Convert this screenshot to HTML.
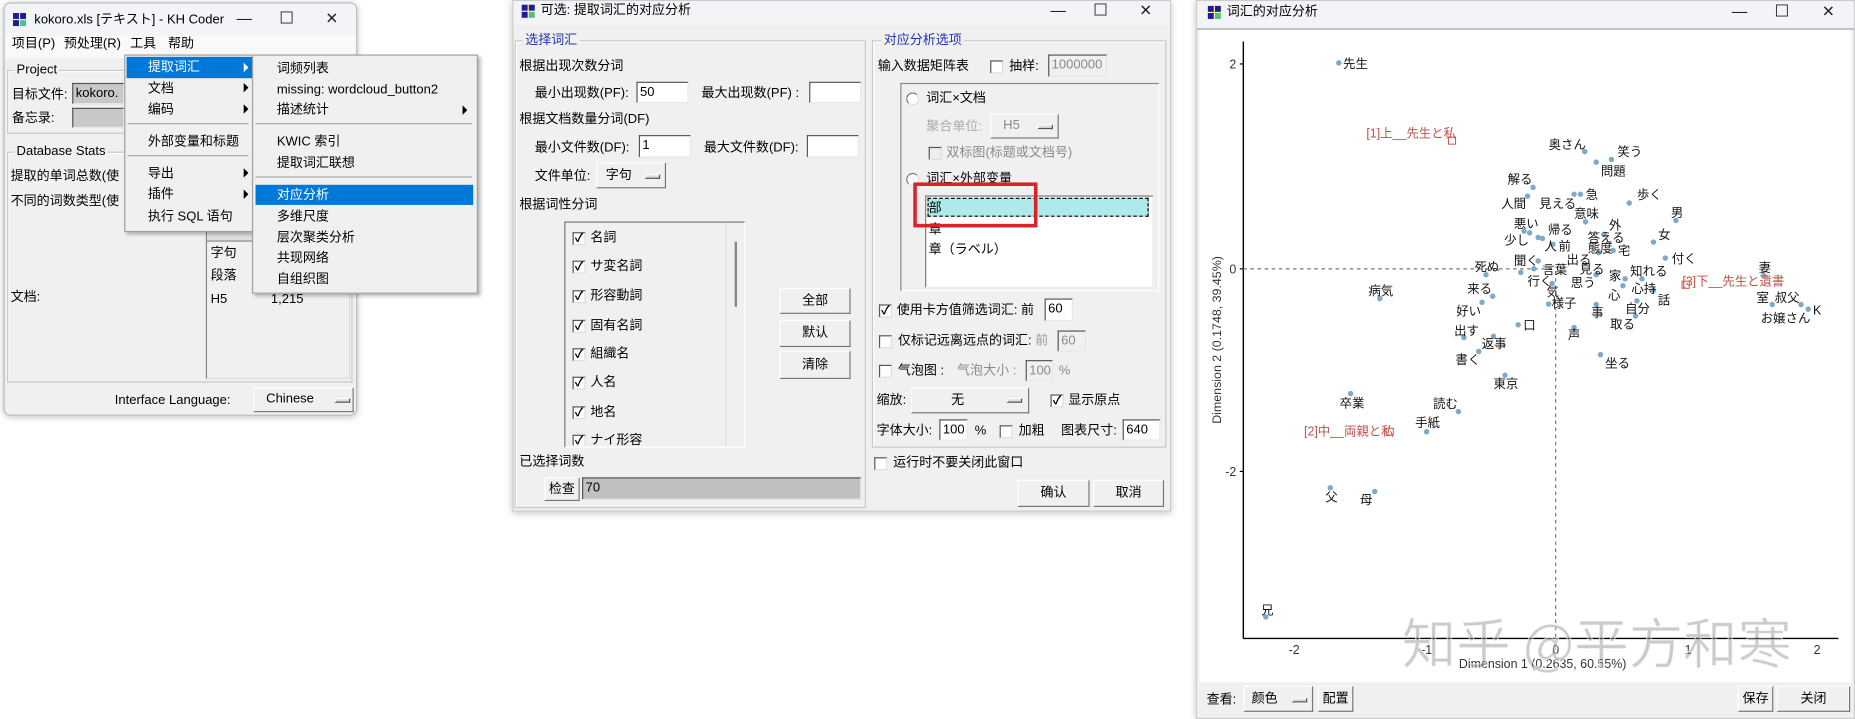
<!DOCTYPE html>
<html><head><meta charset="utf-8">
<style>
html,body{margin:0;padding:0;width:1855px;height:719px;overflow:hidden;background:#fff}
#s{position:absolute;left:0;top:0;width:1568px;height:607px;transform:scale(1.1830,1.1845);transform-origin:0 0;font-family:"Liberation Sans","Noto Sans CJK SC",sans-serif;font-size:11px;color:#000}
.w{position:absolute;background:#f0f0f0;box-shadow:0 1px 6px rgba(0,0,0,.25);border:1px solid #bbb}
.tb{position:absolute;left:0;top:0;right:0;background:#f3f5f9}
.t{position:absolute;white-space:nowrap;line-height:12px}
.g{color:#8a8a8a}
.ico{position:absolute;width:11px;height:11px;background:#fff6a0}
.ico i{position:absolute;width:5px;height:5px;background:#1b1b9c}
.ctl{position:absolute;font-size:13px;line-height:14px;color:#222}
.box{position:absolute;border:1px solid #a0a0a0}
.grp{position:absolute;border:1px solid #c8c8c8;box-shadow:inset 1px 1px 0 #fff}
.lab{position:absolute;background:#f0f0f0;padding:0 2px;line-height:12px;white-space:nowrap}
.inp{position:absolute;background:#fff;border-top:1px solid #555;border-left:1px solid #555;border-bottom:1px solid #e8e8e8;border-right:1px solid #e8e8e8;box-sizing:border-box;line-height:16px;padding-left:2px;white-space:nowrap}
.btn{position:absolute;background:#f0f0f0;border-top:1px solid #fff;border-left:1px solid #fff;border-bottom:1px solid #777;border-right:1px solid #777;box-sizing:border-box;text-align:center;white-space:nowrap}
.mb{position:absolute;width:11px;height:2px;border:1px solid #555;border-top-color:#fff;border-left-color:#fff;background:#ddd}
.cb{position:absolute;width:9px;height:9px;background:#fff;border-top:1px solid #555;border-left:1px solid #555;border-bottom:1px solid #ddd;border-right:1px solid #ddd;font-size:10px;line-height:9px;text-align:center;font-weight:bold}
.rd{position:absolute;width:9px;height:9px;border-radius:50%;background:#fff;border:1px solid #777;border-right-color:#ddd;border-bottom-color:#ddd}
.menu{position:absolute;background:#f0f0f0;border:1px solid #a0a0a0;box-shadow:2px 2px 3px rgba(0,0,0,.3)}
.hl{position:absolute;background:#0078d7}
.sep{position:absolute;height:1px;background:#a0a0a0;border-bottom:1px solid #fff}
.ar{position:absolute;width:0;height:0;border-left:4px solid #000;border-top:4px solid transparent;border-bottom:4px solid transparent}
</style></head><body><div id="s">

<!-- WINDOW 1 -->
<div class="w" style="left:3px;top:2px;width:297px;height:347px;border-radius:6px;overflow:hidden">
 <div class="tb" style="height:27px;background:#f3f4f7"></div>
 <div style="position:absolute;left:0;right:0;top:27px;height:19px;background:#f9f9f9"></div>
</div>
<div class="ico" style="left:11px;top:11px"><i style="left:0;top:0"></i><i style="left:6px;top:0"></i><i style="left:0;top:6px"></i><i style="left:6px;top:6px;background:#4fc08d"></i></div>
<span class="t" style="left:29px;top:11px">kokoro.xls [テキスト] - KH Coder</span>
<span class="ctl" style="left:200px;top:9px">—</span>
<span class="ctl" style="left:236px;top:8px;font-size:14px">☐</span>
<span class="ctl" style="left:275px;top:9px">✕</span>
<span class="t" style="left:10px;top:31px">项目(P)</span>
<span class="t" style="left:54px;top:31px">预处理(R)</span>
<span class="t" style="left:110px;top:31px">工具</span>
<span class="t" style="left:142px;top:31px">帮助</span>
<div class="grp" style="left:6px;top:59px;width:290px;height:52px"></div>
<span class="lab" style="left:12px;top:53px">Project</span>
<span class="t" style="left:10px;top:74px">目标文件:</span>
<div class="inp" style="left:61px;top:70px;width:44px;height:18px;background:#c8c8c8">kokoro.</div>
<span class="t" style="left:10px;top:94px">备忘录:</span>
<div class="inp" style="left:61px;top:91px;width:44px;height:17px;background:#c8c8c8"></div>
<div class="grp" style="left:6px;top:128px;width:290px;height:193px"></div>
<span class="lab" style="left:12px;top:122px">Database Stats</span>
<span class="t" style="left:9px;top:143px">提取的单词总数(使</span>
<span class="t" style="left:9px;top:164px">不同的词数类型(使</span>
<span class="t" style="left:9px;top:245px">文档:</span>
<div class="box" style="left:174px;top:185px;width:120px;height:133px;border-color:#888 #ddd #ddd #888;background:#f0f0f0"></div>
<div style="position:absolute;left:175px;top:194px;width:40px;height:9px;background:#e0e0e0;border-bottom:1px solid #888"></div>
<span class="t" style="left:178px;top:208px">字句</span>
<span class="t" style="left:178px;top:227px">段落</span>
<span class="t" style="left:178px;top:247px">H5</span>
<span class="t" style="left:229px;top:247px">1,215</span>
<span class="t" style="left:97px;top:332px">Interface Language:</span>
<div class="btn" style="left:214px;top:327px;width:85px;height:21px;line-height:19px;text-align:left;padding-left:10px">Chinese</div>
<div class="mb" style="left:283px;top:336px"></div>

<!-- menus -->
<div class="menu" style="left:105px;top:46px;width:108px;height:148px"></div>
<div class="hl" style="left:107px;top:48px;width:106px;height:18px"></div>
<span class="t" style="left:125px;top:51px;color:#fff">提取词汇</span>
<div class="ar" style="left:206px;top:53px;border-left-color:#fff"></div>
<span class="t" style="left:125px;top:69px">文档</span><div class="ar" style="left:206px;top:70px"></div>
<span class="t" style="left:125px;top:87px">编码</span><div class="ar" style="left:206px;top:88px"></div>
<div class="sep" style="left:108px;top:104px;width:102px"></div>
<span class="t" style="left:125px;top:114px">外部变量和标题</span>
<div class="sep" style="left:108px;top:131px;width:102px"></div>
<span class="t" style="left:125px;top:141px">导出</span><div class="ar" style="left:206px;top:142px"></div>
<span class="t" style="left:125px;top:158px">插件</span><div class="ar" style="left:206px;top:160px"></div>
<span class="t" style="left:125px;top:177px">执行 SQL 语句</span>
<div class="menu" style="left:213px;top:46px;width:189px;height:200px"></div>
<span class="t" style="left:234px;top:52px">词频列表</span>
<span class="t" style="left:234px;top:70px">missing: wordcloud_button2</span>
<span class="t" style="left:234px;top:87px">描述统计</span><div class="ar" style="left:391px;top:89px"></div>
<div class="sep" style="left:216px;top:104px;width:183px"></div>
<span class="t" style="left:234px;top:114px">KWIC 索引</span>
<span class="t" style="left:234px;top:132px">提取词汇联想</span>
<div class="sep" style="left:216px;top:149px;width:183px"></div>
<div class="hl" style="left:216px;top:156px;width:184px;height:17px"></div>
<span class="t" style="left:234px;top:159px;color:#fff">对应分析</span>
<span class="t" style="left:234px;top:177px">多维尺度</span>
<span class="t" style="left:234px;top:195px">层次聚类分析</span>
<span class="t" style="left:234px;top:212px">共现网络</span>
<span class="t" style="left:234px;top:230px">自组织图</span>

<!-- WINDOW 2 -->
<div class="w" style="left:433px;top:0px;width:555px;height:430px;border-color:#ccc">
 <div class="tb" style="height:20px;background:#f3f4f7"></div>
</div>
<div class="ico" style="left:441px;top:4px"><i style="left:0;top:0"></i><i style="left:6px;top:0"></i><i style="left:0;top:6px"></i><i style="left:6px;top:6px;background:#4fc08d"></i></div>
<span class="t" style="left:457px;top:3px">可选: 提取词汇的对应分析</span>
<span class="ctl" style="left:888px;top:2px">—</span>
<span class="ctl" style="left:924px;top:1px;font-size:14px">☐</span>
<span class="ctl" style="left:963px;top:2px">✕</span>

<div class="grp" style="left:435px;top:34px;width:295px;height:393px"></div>
<span class="lab" style="left:442px;top:28px;color:#2233aa">选择词汇</span>
<span class="t" style="left:439px;top:50px">根据出现次数分词</span>
<span class="t" style="left:452px;top:73px">最小出现数(PF):</span>
<div class="inp" style="left:538px;top:69px;width:44px;height:18px">50</div>
<span class="t" style="left:593px;top:73px">最大出现数(PF) :</span>
<div class="inp" style="left:684px;top:69px;width:44px;height:18px"></div>
<span class="t" style="left:439px;top:95px">根据文档数量分词(DF)</span>
<span class="t" style="left:452px;top:119px">最小文件数(DF):</span>
<div class="inp" style="left:540px;top:114px;width:44px;height:19px">1</div>
<span class="t" style="left:595px;top:119px">最大文件数(DF):</span>
<div class="inp" style="left:682px;top:114px;width:44px;height:19px"></div>
<span class="t" style="left:452px;top:143px">文件单位:</span>
<div class="btn" style="left:504px;top:137px;width:59px;height:22px;line-height:20px;text-align:left;padding-left:7px">字句</div>
<div class="mb" style="left:545px;top:147px"></div>
<span class="t" style="left:439px;top:167px">根据词性分词</span>
<div class="box" style="left:477px;top:187px;width:151px;height:189px;border-color:#777 #fff #fff #777;overflow:hidden">
 <div style="position:absolute;left:135px;top:0;width:1px;height:189px;background:#ddd"></div>
 <div style="position:absolute;left:143px;top:16px;width:2px;height:55px;background:#888"></div>
</div>
<div style="position:absolute;left:480px;top:191px;width:130px;height:185px;overflow:hidden">
 <div class="cb" style="left:4px;top:5px">✓</div><span class="t" style="left:19px;top:4px">名詞</span>
 <div class="cb" style="left:4px;top:29px">✓</div><span class="t" style="left:19px;top:28px">サ変名詞</span>
 <div class="cb" style="left:4px;top:54px">✓</div><span class="t" style="left:19px;top:53px">形容動詞</span>
 <div class="cb" style="left:4px;top:79px">✓</div><span class="t" style="left:19px;top:78px">固有名詞</span>
 <div class="cb" style="left:4px;top:103px">✓</div><span class="t" style="left:19px;top:102px">組織名</span>
 <div class="cb" style="left:4px;top:127px">✓</div><span class="t" style="left:19px;top:126px">人名</span>
 <div class="cb" style="left:4px;top:152px">✓</div><span class="t" style="left:19px;top:151px">地名</span>
 <div class="cb" style="left:4px;top:176px">✓</div><span class="t" style="left:19px;top:175px">ナイ形容</span>
</div>
<div class="btn" style="left:659px;top:243px;width:60px;height:22px;line-height:20px">全部</div>
<div class="btn" style="left:659px;top:270px;width:60px;height:23px;line-height:21px">默认</div>
<div class="btn" style="left:659px;top:296px;width:60px;height:24px;line-height:22px">清除</div>
<span class="t" style="left:439px;top:384px">已选择词数</span>
<div class="btn" style="left:460px;top:403px;width:30px;height:20px;line-height:18px">检查</div>
<div class="inp" style="left:492px;top:403px;width:236px;height:19px;background:#c0c0c0">70</div>

<div class="grp" style="left:737px;top:34px;width:247px;height:342px"></div>
<span class="lab" style="left:745px;top:28px;color:#2233aa">对应分析选项</span>
<span class="t" style="left:742px;top:50px">输入数据矩阵表</span>
<div class="cb" style="left:837px;top:51px"></div>
<span class="t" style="left:853px;top:50px">抽样:</span>
<div class="inp g" style="left:886px;top:46px;width:50px;height:19px;background:#f0f0f0">1000000</div>
<div class="box" style="left:761px;top:70px;width:217px;height:174px;border-color:#888 #fff #fff #888"></div>
<div class="rd" style="left:766px;top:78px"></div>
<span class="t" style="left:783px;top:77px">词汇×文档</span>
<span class="t g" style="left:783px;top:101px;color:#aaa">聚合单位:</span>
<div class="btn g" style="left:837px;top:96px;width:58px;height:21px;line-height:19px;text-align:left;padding-left:10px">H5</div>
<div class="mb" style="left:877px;top:105px"></div>
<div class="cb" style="left:785px;top:124px;background:#eee"></div>
<span class="t g" style="left:800px;top:123px">双标图(标题或文档号)</span>
<div class="rd" style="left:766px;top:146px"></div>
<span class="t" style="left:783px;top:145px">词汇×外部变量</span>
<div class="box" style="left:782px;top:165px;width:191px;height:76px;background:#fff;border-color:#777 #eee #eee #777"></div>
<div style="position:absolute;left:784px;top:167px;width:187px;height:16px;background:#aeeaea;border:1px dashed #000;box-sizing:border-box"></div>
<span class="t" style="left:785px;top:170px">部</span>
<span class="t" style="left:785px;top:188px">章</span>
<span class="t" style="left:785px;top:205px">章（ラベル）</span>
<div style="position:absolute;left:772px;top:154px;width:105px;height:38px;border:3px solid #d8232a;box-sizing:border-box"></div>
<div class="cb" style="left:743px;top:257px">✓</div>
<span class="t" style="left:758px;top:256px">使用卡方值筛选词汇: 前</span>
<div class="inp" style="left:883px;top:252px;width:24px;height:19px">60</div>
<div class="cb" style="left:743px;top:283px"></div>
<span class="t" style="left:759px;top:282px">仅标记远离远点的词汇: <span style="color:#999">前</span></span>
<div class="inp g" style="left:894px;top:279px;width:24px;height:18px;background:#f0f0f0">60</div>
<div class="cb" style="left:743px;top:308px"></div>
<span class="t" style="left:759px;top:307px">气泡图 :</span>
<span class="t g" style="left:809px;top:307px">气泡大小 :</span>
<div class="inp g" style="left:867px;top:304px;width:23px;height:18px;background:#f0f0f0">100</div>
<span class="t g" style="left:895px;top:307px">%</span>
<span class="t" style="left:741px;top:332px">缩放:</span>
<div class="btn" style="left:770px;top:327px;width:100px;height:22px;line-height:20px;text-align:left;padding-left:33px">无</div>
<div class="mb" style="left:851px;top:336px"></div>
<div class="cb" style="left:888px;top:333px">✓</div>
<span class="t" style="left:903px;top:332px">显示原点</span>
<span class="t" style="left:741px;top:358px">字体大小:</span>
<div class="inp" style="left:794px;top:354px;width:24px;height:18px">100</div>
<span class="t" style="left:824px;top:358px">%</span>
<div class="cb" style="left:845px;top:359px"></div>
<span class="t" style="left:861px;top:358px">加粗</span>
<span class="t" style="left:897px;top:358px">图表尺寸:</span>
<div class="inp" style="left:949px;top:354px;width:32px;height:18px">640</div>
<div class="cb" style="left:739px;top:386px"></div>
<span class="t" style="left:755px;top:385px">运行时不要关闭此窗口</span>
<div class="btn" style="left:860px;top:405px;width:61px;height:23px;line-height:21px">确认</div>
<div class="btn" style="left:924px;top:405px;width:60px;height:23px;line-height:21px">取消</div>

<!-- WINDOW 3 -->
<div class="w" style="left:1011px;top:0px;width:555px;height:605px;border-color:#ccc">
 <div class="tb" style="height:23px;background:#f3f4f7;border-bottom:1px solid #999"></div>
 <div style="position:absolute;left:2px;right:2px;top:24px;height:552px;background:#fff"></div>
</div>
<div class="ico" style="left:1021px;top:5px"><i style="left:0;top:0"></i><i style="left:6px;top:0"></i><i style="left:0;top:6px"></i><i style="left:6px;top:6px;background:#4fc08d"></i></div>
<span class="t" style="left:1037px;top:4px">词汇的对应分析</span>
<span class="ctl" style="left:1464px;top:3px">—</span>
<span class="ctl" style="left:1500px;top:2px;font-size:14px">☐</span>
<span class="ctl" style="left:1540px;top:3px">✕</span>
<svg id="plot" style="position:absolute;left:0;top:0" width="1568" height="607" font-family="Liberation Sans, Noto Sans CJK JP, sans-serif" font-size="10.5">
 <line x1="1051" y1="35" x2="1051" y2="539" stroke="#000" stroke-width="1.2"/>
 <line x1="1051" y1="539" x2="1554" y2="539" stroke="#000" stroke-width="1.2"/>
 <line x1="1048" y1="54" x2="1051" y2="54" stroke="#000"/>
 <line x1="1048" y1="227" x2="1051" y2="227" stroke="#000"/>
 <line x1="1048" y1="398" x2="1051" y2="398" stroke="#000"/>
 <text x="1045" y="58" text-anchor="end" fill="#333">2</text>
 <text x="1045" y="231" text-anchor="end" fill="#333">0</text>
 <text x="1045" y="402" text-anchor="end" fill="#333">-2</text>
 <text x="1094" y="552" text-anchor="middle" fill="#333">-2</text>
 <text x="1206" y="552" text-anchor="middle" fill="#333">-1</text>
 <text x="1315" y="552" text-anchor="middle" fill="#333">0</text>
 <text x="1427" y="552" text-anchor="middle" fill="#333">1</text>
 <text x="1536" y="552" text-anchor="middle" fill="#333">2</text>
 <text x="1304" y="564" text-anchor="middle" fill="#333">Dimension 1  (0.2635,  60.55%)</text>
 <text transform="translate(1032,287) rotate(-90)" text-anchor="middle" fill="#333">Dimension 2  (0.1748,  39.45%)</text>
 <line x1="1051" y1="227" x2="1315" y2="227" stroke="#777" stroke-dasharray="3,3"/>
 <line x1="1315" y1="229" x2="1315" y2="539" stroke="#777" stroke-dasharray="3,3"/>
 <g id="pts"></g>
 <text x="1185" y="560" font-size="46" fill="rgba(140,140,140,0.45)" stroke="rgba(255,255,255,0.6)" stroke-width="1" font-family="Noto Sans CJK SC, sans-serif">知乎 @平方和寒</text>
</svg>
<div style="position:absolute;left:1012px;top:576px;width:553px;height:29px;background:#f0f0f0"></div>
<span class="t" style="left:1020px;top:585px">查看:</span>
<div class="btn" style="left:1051px;top:579px;width:59px;height:22px;line-height:20px;text-align:left;padding-left:6px">颜色</div>
<div class="mb" style="left:1092px;top:589px"></div>
<div class="btn" style="left:1114px;top:579px;width:30px;height:22px;line-height:20px">配置</div>
<div class="btn" style="left:1469px;top:579px;width:30px;height:22px;line-height:20px">保存</div>
<div class="btn" style="left:1502px;top:579px;width:62px;height:22px;line-height:20px">关闭</div>

<script>
var X=function(z){return 1006.2+z*0.3585},Y=function(z){return z*0.3878};
var dots=[[350,137],[930,330],[993,347],[957,353],[808,408],[795,427],[905,423],[920,423],[932,483],[1035,442],[1145,480],[787,503],[800,507],[975,510],[1092,527],[820,517],[830,519],[855,532],[963,550],[997,545],[1120,562],[820,568],[697,598],[810,585],[779,593],[957,598],[1025,607],[1065,607],[1352,600],[853,617],[1020,622],[1092,632],[447,650],[713,645],[1372,663],[1440,663],[1457,673],[845,662],[957,663],[1053,655],[1050,688],[688,658],[773,707],[645,735],[905,713],[715,732],[680,765],[967,772],[742,817],[378,857],[632,896],[557,940],[330,1062],[435,1070],[178,1343]];
var labs=[["先生",360,138],["奥さん",845,315],["笑う",1007,330],["問題",968,372],["解る",748,390],["人間",733,443],["見える",823,443],["急",932,423],["意味",905,465],["歩く",1053,423],["男",1133,463],["悪い",763,487],["帰る",843,500],["外",987,490],["少し",740,523],["答える",937,517],["女",1103,510],["人",835,535],["前",868,535],["態度",937,540],["宅",1008,545],["付く",1135,563],["聞く",763,567],["出る",887,565],["死ぬ",670,580],["言葉",830,587],["見る",918,585],["家",987,600],["知れる",1037,590],["妻",1340,582],["行く",795,612],["思う",897,615],["気",840,635],["心持",1040,628],["心",985,642],["病気",420,632],["来る",653,628],["話",1102,653],["室",1335,648],["叔父",1378,648],["K",1468,675],["様子",852,660],["事",945,680],["自分",1025,672],["好い",627,677],["お嬢さん",1345,692],["口",785,707],["取る",990,705],["出す",622,720],["声",890,728],["返事",687,748],["書く",625,783],["坐る",978,790],["東京",715,835],["卒業",352,877],["読む",572,878],["手紙",530,920],["父",318,1082],["母",400,1087],["兄",167,1328]];
var red=[["[1]上__先生と私",415,290],["[3]下__先生と遺書",1160,612],["[2]中__両親と私",268,938]];
var sq=[[617,306],[1168,620],[470,940]];
var g=document.getElementById("pts"),ns="http://www.w3.org/2000/svg",h="";
dots.forEach(function(d){h+='<circle cx="'+X(d[0]).toFixed(1)+'" cy="'+Y(d[1]).toFixed(1)+'" r="2.3" fill="#7ea9c9"/>';});
labs.forEach(function(l){h+='<text x="'+X(l[1]).toFixed(1)+'" y="'+(Y(l[2])+3.8).toFixed(1)+'" fill="#111">'+l[0]+'</text>';});
red.forEach(function(l){h+='<text x="'+X(l[1]).toFixed(1)+'" y="'+(Y(l[2])+3.8).toFixed(1)+'" fill="#c0504d">'+l[0]+'</text>';});
sq.forEach(function(s){h+='<rect x="'+(X(s[0])-3).toFixed(1)+'" y="'+(Y(s[1])-3).toFixed(1)+'" width="6" height="6" fill="none" stroke="#d05040" stroke-width="0.8"/>';});
g.innerHTML=h;
</script>
</div></body></html>
